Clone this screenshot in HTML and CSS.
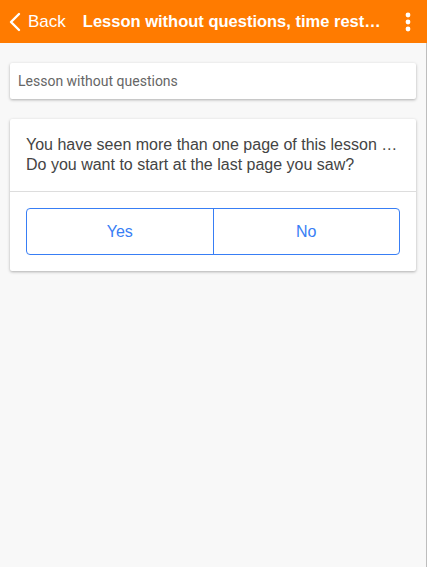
FILE: index.html
```html
<!DOCTYPE html>
<html lang="en">
<head>
  <meta charset="UTF-8">
  <title>Lesson</title>
  <link rel="stylesheet" href="styles.css">
</head>
<body>
  <header class="bar">
    <button class="back">
      <svg width="12" height="20" viewBox="0 0 12 20"><path d="M10 2 L2 10 L10 18" fill="none" stroke="#fff" stroke-width="2.4" stroke-linecap="round" stroke-linejoin="round"/></svg>
      <span>Back</span>
    </button>
    <h1 class="title">Lesson without questions, time rest…</h1>
    <button class="more">
      <svg width="6" height="20" viewBox="0 0 6 20"><circle cx="3" cy="3" r="2.4" fill="#fff"/><circle cx="3" cy="10" r="2.4" fill="#fff"/><circle cx="3" cy="17" r="2.4" fill="#fff"/></svg>
    </button>
  </header>

  <main class="content">
    <div class="card name">Lesson without questions</div>

    <div class="card prompt">
      <p class="question">
        <span>You have seen more than one page of this lesson …</span>
        <span>Do you want to start at the last page you saw?</span>
      </p>
      <div class="actions">
        <div class="segment">
          <button>Yes</button>
          <button>No</button>
        </div>
      </div>
    </div>
  </main>
</body>
</html>
```

FILE: styles.css
```css
* {
  margin: 0;
  padding: 0;
  box-sizing: border-box;
}

body {
  font-family: "Liberation Sans", Arial, sans-serif;
  background: #f8f8f8;
  width: 427px;
  height: 567px;
  overflow: hidden;
  display: flex;
  flex-direction: column;
}

.bar {
  height: 43px;
  background: #ff7b00;
  color: #fff;
  display: flex;
  align-items: center;
  padding: 0 12px 0 9px;
  flex-shrink: 0;
}

.bar button {
  background: none;
  border: none;
  color: #fff;
  font-family: inherit;
}

.back {
  display: flex;
  align-items: center;
  gap: 7px;
  font-size: 17px;
}

.title {
  font-size: 16.5px;
  font-weight: bold;
  margin-left: 17px;
  white-space: nowrap;
}

.more {
  margin-left: auto;
  display: flex;
  padding-right: 4px;
}

.content {
  flex: 1;
  border-right: 1px solid #bdbdbd;
  padding: 20px 10px;
}

.card {
  background: #fff;
  border-radius: 2px;
  box-shadow: 0 1px 3px rgba(0, 0, 0, 0.3);
}

.name {
  height: 36px;
  padding: 0 8px;
  display: flex;
  align-items: center;
  font-family: Roboto, sans-serif;
  font-size: 14px;
  color: #666;
  margin-bottom: 20px;
}

.question {
  padding: 16px;
  font-size: 16px;
  line-height: 20px;
  color: #444;
  border-bottom: 1px solid #ddd;
  display: flex;
  flex-direction: column;
  white-space: nowrap;
}

.actions {
  padding: 16px;
}

.segment {
  display: flex;
  border: 1px solid #387ef5;
  border-radius: 4px;
  height: 47px;
}

.segment button {
  flex: 1;
  background: none;
  border: none;
  color: #387ef5;
  font-family: inherit;
  font-size: 16px;
}

.segment button + button {
  border-left: 1px solid #387ef5;
}
```
